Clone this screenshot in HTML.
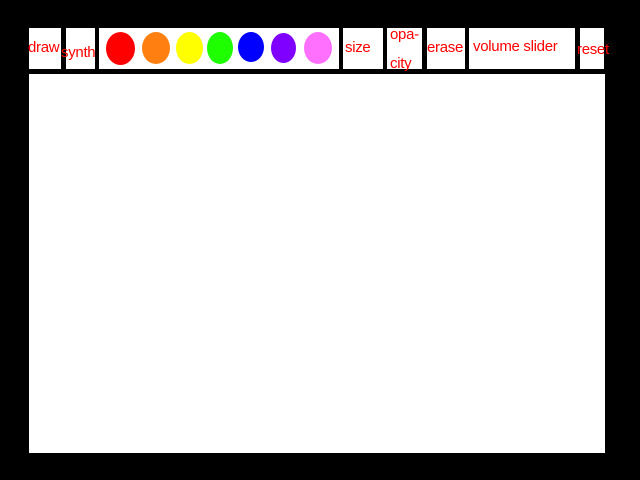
<!DOCTYPE html>
<html><head><style>
body{margin:0;width:640px;height:480px;background:#000;position:relative;overflow:hidden;font-family:"Comic Sans MS","Liberation Sans",sans-serif;}
.b{position:absolute;background:#fff;top:28px;height:41px;}
.t{position:absolute;color:#f00;font-size:15px;white-space:nowrap;line-height:16px;letter-spacing:-0.3px;}
.c{position:absolute;border-radius:50%;}
</style></head><body>
<div class="b" style="left:29px;width:32px"></div>
<div class="b" style="left:66px;width:29px"></div>
<div class="b" style="left:99px;width:240px"></div>
<div class="b" style="left:343px;width:40px"></div>
<div class="b" style="left:387px;width:35px"></div>
<div class="b" style="left:427px;width:38px"></div>
<div class="b" style="left:469px;width:106px"></div>
<div class="b" style="left:580px;width:24px"></div>
<div style="position:absolute;left:29px;top:74px;width:576px;height:379px;background:#fff"></div>
<div class="c" style="left:106px;top:32px;width:29px;height:33px;background:#ff0000"></div>
<div class="c" style="left:142px;top:32px;width:28px;height:32px;background:#ff8010"></div>
<div class="c" style="left:176px;top:32px;width:27px;height:32px;background:#ffff00"></div>
<div class="c" style="left:207px;top:32px;width:26px;height:32px;background:#1eff00"></div>
<div class="c" style="left:238px;top:32px;width:26px;height:30px;background:#0000ff"></div>
<div class="c" style="left:271px;top:33px;width:25px;height:30px;background:#8000ff"></div>
<div class="c" style="left:304px;top:32px;width:28px;height:32px;background:#ff70ff"></div>
<div class="t" style="left:28px;top:40px">draw</div>
<div class="t" style="left:61px;top:45px">synth</div>
<div class="t" style="left:345px;top:40px">size</div>
<div class="t" style="left:390px;top:27px">opa-</div>
<div class="t" style="left:390px;top:56px">city</div>
<div class="t" style="left:427px;top:40px">erase</div>
<div class="t" style="left:473px;top:39px">volume slider</div>
<div class="t" style="left:577px;top:42px">reset</div>
</body></html>
